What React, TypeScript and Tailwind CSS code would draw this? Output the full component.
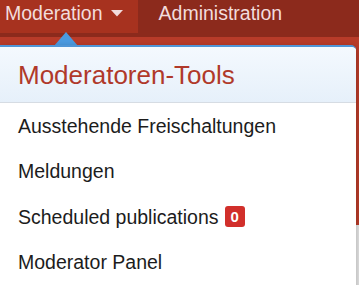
import React from "react";

export default function App() {
  const items = [
    { label: "Ausstehende Freischaltungen" },
    { label: "Meldungen" },
    { label: "Scheduled publications", badge: "0" },
    { label: "Moderator Panel" },
  ];
  return (
    <div
      className="relative h-[285px] w-[359px] overflow-hidden flex flex-col bg-[#e4e4e4]"
      style={{ fontFamily: '"Liberation Sans", Arial, Helvetica, sans-serif' }}
    >
      {/* nav bar */}
      <nav className="h-[37px] bg-[#8c2a1c] flex items-start shrink-0">
        <div className="h-[33px] bg-[#a7321f] pl-[5px] pr-[15px] pt-[1px] flex items-start">
          <span className="text-[19.5px] leading-[24px] text-[#f2dcdc]">Moderation</span>
          <svg width="12" height="7" viewBox="0 0 12 7" className="ml-[8px] mt-[9px]">
            <path d="M0 0 L12 0 L6 6.5 Z" fill="#f2dcdc" />
          </svg>
        </div>
        <div className="ml-[21px] pt-[1px]">
          <span className="text-[19.5px] leading-[24px] text-[#f2dcdc]">Administration</span>
        </div>
      </nav>
      {/* red page header behind */}
      <div className="h-[188px] bg-[#b83b29] shrink-0" />
      <div className="flex-1 bg-[#e2e2e2]" />

      {/* dropdown arrow */}
      <svg
        width="24"
        height="14"
        viewBox="0 0 24 14"
        className="absolute left-[54px] top-[32px]"
      >
        <path d="M0 14 L12 0 L24 14 Z" fill="#4a9ae0" />
      </svg>

      {/* dropdown menu */}
      <div className="absolute left-0 top-[45px] w-[356px] h-[260px] bg-white border-t-2 border-[#4f95d6] rounded-tr-[5px] shadow-[0_2px_6px_rgba(0,0,0,0.25)] overflow-hidden">
        <div className="h-[56px] flex items-center pl-[18px] bg-gradient-to-b from-[#f4f9fe] to-[#e6f0fa] border-b border-[#d6dce3]">
          <span className="text-[26px] leading-[30px] text-[#b0392a]">Moderatoren-Tools</span>
        </div>
        <div className="flex flex-col">
          {items.map((it) => (
            <div key={it.label} className="h-[45.5px] flex items-center pl-[18px]">
              <span className="text-[19.5px] leading-[24px] text-[#1c1c1c]">{it.label}</span>
              {it.badge && (
                <span className="ml-[6px] w-[20px] h-[21px] rounded-[3px] bg-[#d12f2b] text-white text-[15px] font-bold flex items-center justify-center leading-none">
                  {it.badge}
                </span>
              )}
            </div>
          ))}
        </div>
      </div>
    </div>
  );
}
